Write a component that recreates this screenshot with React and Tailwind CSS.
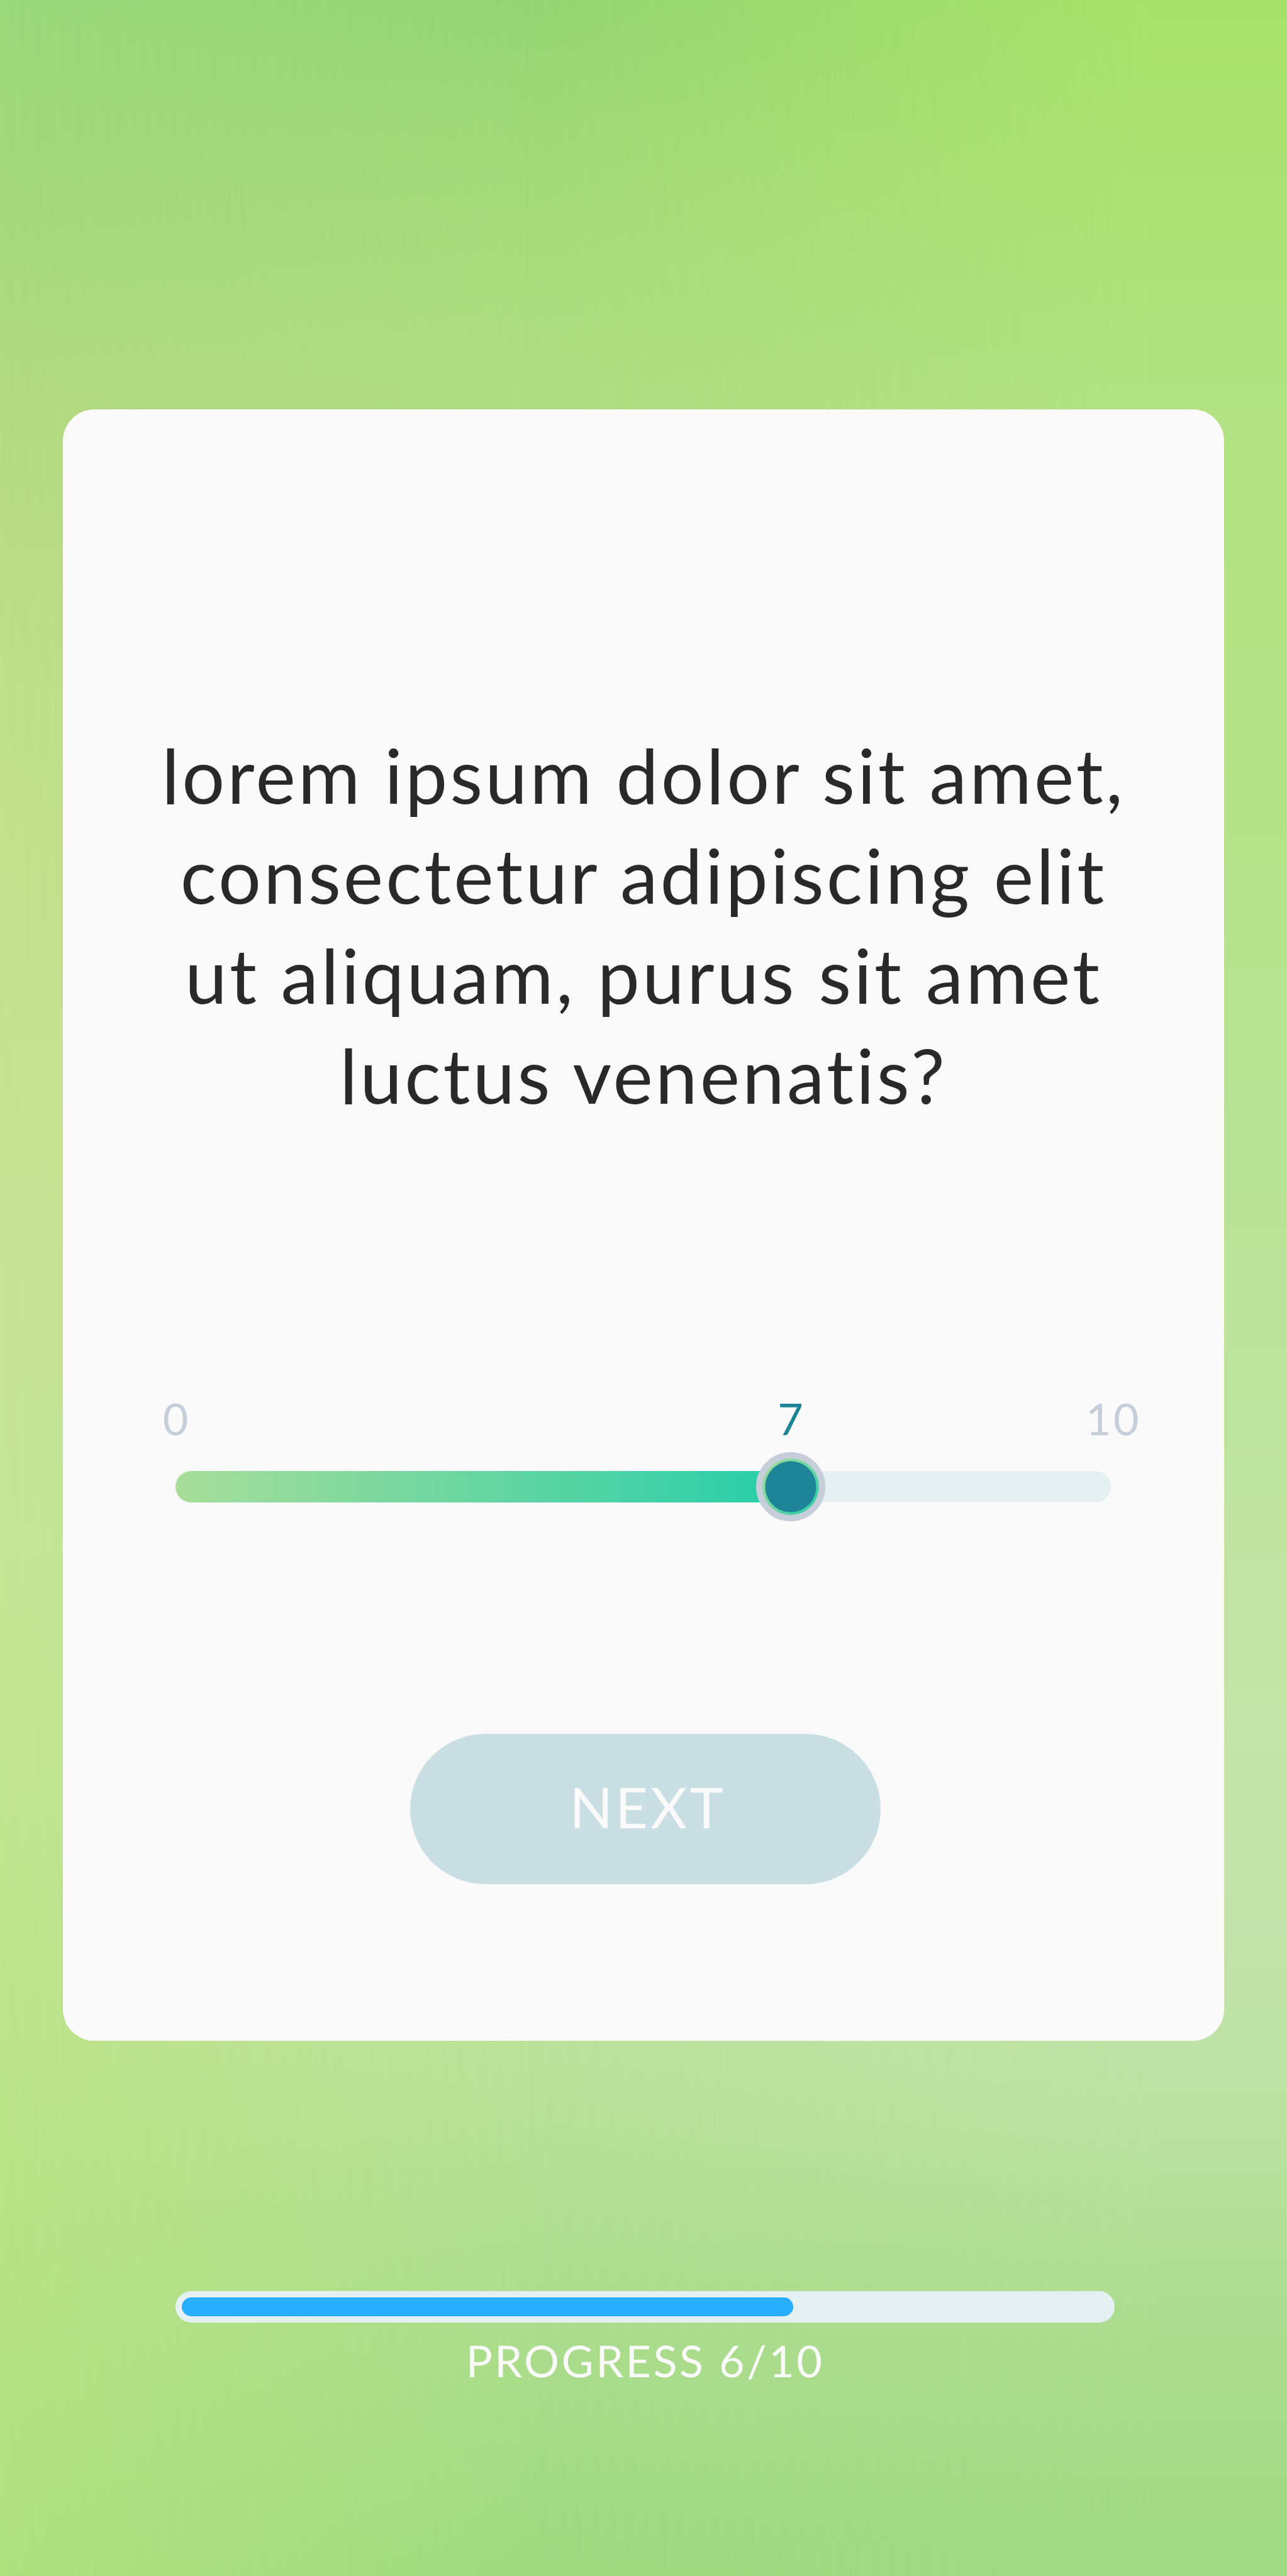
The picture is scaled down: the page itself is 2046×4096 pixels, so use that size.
import { useState } from "react";

const MIN = 0;
const MAX = 10;
const THUMB = 110;

function Backdrop() {
  return (
    <div aria-hidden="true" className="grid [grid-area:1/1]">
      <div className="[grid-area:1/1] bg-[linear-gradient(to_bottom,#9cd87c_0%,#a5d87c_8%,#b2d981_15%,#bedf87_24%,#c5e08e_34%,#c8e396_50%,#c6e596_60%,#bfe48e_73%,#bae386_85%,#b0e17f_100%)]" />
      <div className="[grid-area:1/1] bg-[linear-gradient(to_bottom,#96d574_0%,#a2d978_6%,#afdc80_15%,#b4dd86_30%,#bee09c_75%,#bbe19b_80%,#acdd8e_90%,#9ed97f_100%)] [mask-image:linear-gradient(to_right,transparent,black_42%)]" />
      <div className="[grid-area:1/1] bg-[linear-gradient(to_bottom,#a7e169_0%,#ace173_7%,#b2e283_16%,#b5e286_28%,#b8e295_45%,#c4e4a8_66%,#c2e3ab_75%,#bce1a2_82%,#abdc8e_91%,#a3d985_97%,#a2da84_100%)] [mask-image:linear-gradient(to_right,transparent_40%,black_90%)]" />
    </div>
  );
}

function RatingSlider({ value, onChange }) {
  const ratio = (value - MIN) / (MAX - MIN);
  const center = `calc(${ratio * 100}% + ${THUMB / 2 - ratio * THUMB}px)`;
  return (
    <div className="mr-[6px]">
      <div className="relative h-[84px] text-[70px] leading-[84px] text-[#c5ced9]">
        <span className="absolute left-0 -translate-x-1/2">{MIN}</span>
        <output htmlFor="rating" className="absolute -translate-x-1/2 text-[#1d8597]" style={{ left: center }}>
          {Math.round(value)}
        </output>
        <span className="absolute left-full -translate-x-1/2 pl-2 tracking-wider">{MAX}</span>
      </div>
      <input
        id="rating"
        type="range"
        aria-labelledby="question"
        min={MIN}
        max={MAX}
        step="0.1"
        value={value}
        onChange={(e) => onChange(Number(e.target.value))}
        style={{ "--fill": center }}
        className="mt-3 block h-[110px] w-full cursor-pointer appearance-none bg-transparent [&::-webkit-slider-runnable-track]:h-[50px] [&::-webkit-slider-runnable-track]:rounded-full [&::-webkit-slider-runnable-track]:bg-[#e4f0f2] [&::-webkit-slider-runnable-track]:bg-[linear-gradient(to_right,#a8dd9a,#26ceaa)] [&::-webkit-slider-runnable-track]:[background-size:var(--fill)_100%] [&::-webkit-slider-runnable-track]:bg-no-repeat [&::-webkit-slider-thumb]:mt-[-30px] [&::-webkit-slider-thumb]:size-[110px] [&::-webkit-slider-thumb]:appearance-none [&::-webkit-slider-thumb]:rounded-full [&::-webkit-slider-thumb]:border-[10px] [&::-webkit-slider-thumb]:border-[#c5ced9] [&::-webkit-slider-thumb]:[background:radial-gradient(circle,#1d8597_40px,transparent_41px),linear-gradient(135deg,#a8dd9a,#26ceaa)_padding-box,#c5ced9]"
      />
    </div>
  );
}

function Progress({ step, total, value }) {
  return (
    <footer className="mt-[398px] pr-[274px] pb-[301px] pl-[279px]">
      <progress
        id="survey-progress"
        max={total}
        value={value}
        className="block h-[50px] w-full appearance-none rounded-full border-[10px] border-[#e4f0f2] bg-[#e4f0f2] [&::-webkit-progress-bar]:rounded-full [&::-webkit-progress-bar]:bg-[#e4f0f2] [&::-webkit-progress-value]:rounded-full [&::-webkit-progress-value]:bg-[#29adff]"
      />
      <label htmlFor="survey-progress" className="mt-[18px] block text-center text-[70px] leading-[84px] tracking-wider text-[#fafafa]">
        PROGRESS {step}/{total}
      </label>
    </footer>
  );
}

export default function App() {
  const [rating, setRating] = useState(6.7);
  return (
    <div className="grid min-h-screen font-['Lato',sans-serif]">
      <Backdrop />
      <main className="z-10 flex flex-col [grid-area:1/1]">
        <section className="mx-[100px] mt-[651px] rounded-[50px] bg-[#fafafa] pt-[502px] pb-[249px]">
          <h1 id="question" className="px-[140px] text-center text-[120px] leading-[159px] tracking-[4px] text-[#292929]">
            lorem ipsum dolor sit amet, consectetur adipiscing elit ut aliquam, purus sit amet luctus venenatis?
          </h1>
          <div className="mt-[424px] pr-[174px] pl-[179px]">
            <RatingSlider value={rating} onChange={setRating} />
            <button
              type="button"
              className="mx-auto mt-[338px] block h-[239px] w-[748px] rounded-full bg-[#cadfe4] pb-2 pl-2 text-[90px] tracking-[4px] text-[#fafafa]"
            >
              NEXT
            </button>
          </div>
        </section>
        <Progress step={6} total={10} value={6.6} />
      </main>
    </div>
  );
}
